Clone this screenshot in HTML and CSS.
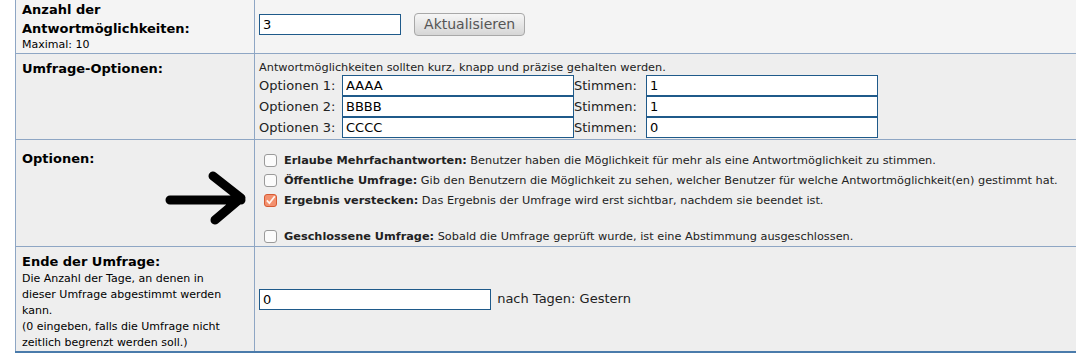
FILE: index.html
```html
<!DOCTYPE HTML>
<html>
<head>
<meta charset="utf-8">
<title>Umfrage erstellen</title>
<link rel="stylesheet" href="styles.css">
</head>
<body>
<div class="page">
  <table class="form">
    <tr class="rowTop">
      <td class="label">
        <b>Anzahl der<br>Antwortmöglichkeiten:</b>
        <div class="hint">Maximal: 10</div>
      </td>
      <td class="field">
        <div class="countBox">
          <input type="text" class="txt txtCount" value="3">
          <button type="button" class="btn">Aktualisieren</button>
        </div>
      </td>
    </tr>
    <tr class="rowOpts">
      <td class="label"><b>Umfrage-Optionen:</b></td>
      <td class="field fieldOpts">
        <div class="note">Antwortmöglichkeiten sollten kurz, knapp und präzise gehalten werden.</div>
        <div class="optGrid">
          <span>Optionen 1:</span><input type="text" class="txt" value="AAAA"><span>Stimmen:</span><input type="text" class="txt" value="1">
          <span>Optionen 2:</span><input type="text" class="txt" value="BBBB"><span>Stimmen:</span><input type="text" class="txt" value="1">
          <span>Optionen 3:</span><input type="text" class="txt" value="CCCC"><span>Stimmen:</span><input type="text" class="txt" value="0">
        </div>
      </td>
    </tr>
    <tr class="rowChecks">
      <td class="label"><b>Optionen:</b></td>
      <td class="field fieldChecks">
        <div class="chk">
          <svg class="box" width="13" height="13" viewBox="0 0 13 13"><rect x="0.5" y="0.5" width="12" height="12" rx="2.5" fill="#fbfbfb" stroke="#9a9a9a"/></svg>
          <span><b>Erlaube Mehrfachantworten:</b> Benutzer haben die Möglichkeit für mehr als eine Antwortmöglichkeit zu stimmen.</span>
        </div>
        <div class="chk">
          <svg class="box" width="13" height="13" viewBox="0 0 13 13"><rect x="0.5" y="0.5" width="12" height="12" rx="2.5" fill="#fbfbfb" stroke="#9a9a9a"/></svg>
          <span><b>Öffentliche Umfrage:</b> Gib den Benutzern die Möglichkeit zu sehen, welcher Benutzer für welche Antwortmöglichkeit(en) gestimmt hat.</span>
        </div>
        <div class="chk">
          <svg class="box" width="13" height="13" viewBox="0 0 13 13"><rect x="0.5" y="0.5" width="12" height="12" rx="2.5" fill="#f3906e" stroke="#d65a33"/><path d="M2.8 6.4 L5.4 9.2 L10.8 2.2" fill="none" stroke="#fff4ee" stroke-width="1.8"/></svg>
          <span><b>Ergebnis verstecken:</b> Das Ergebnis der Umfrage wird erst sichtbar, nachdem sie beendet ist.</span>
        </div>
        <div class="chk chkLast">
          <svg class="box" width="13" height="13" viewBox="0 0 13 13"><rect x="0.5" y="0.5" width="12" height="12" rx="2.5" fill="#fbfbfb" stroke="#9a9a9a"/></svg>
          <span><b>Geschlossene Umfrage:</b> Sobald die Umfrage geprüft wurde, ist eine Abstimmung ausgeschlossen.</span>
        </div>
      </td>
    </tr>
    <tr class="rowEnd">
      <td class="label">
        <b>Ende der Umfrage:</b>
        <div class="hint hintLong">Die Anzahl der Tage, an denen in dieser Umfrage abgestimmt werden kann.<br>(0 eingeben, falls die Umfrage nicht zeitlich begrenzt werden soll.)</div>
      </td>
      <td class="field">
        <input type="text" class="txt txtDays" value="0"> <span class="after">nach Tagen: Gestern</span>
      </td>
    </tr>
  </table>

  <!-- hand drawn arrow on top of the screenshot -->
  <svg class="arrow" width="100" height="64" viewBox="0 0 100 64">
    <path d="M10 32 L81 32 M53 8 L81 30 L55 52" fill="none" stroke="#000" stroke-width="9" stroke-linecap="round" stroke-linejoin="round"/>
  </svg>
</div>
</body>
</html>
```

FILE: styles.css
```css
html, body { margin:0; padding:0; }
body { background:#fff; font-family:"DejaVu Sans", Verdana, sans-serif; color:#000; overflow:hidden; }
.page { position:relative; padding-left:15px; }
.form { width:1090px; border-collapse:collapse; table-layout:fixed; border-left:1px solid #8ea6c4; border-bottom:2px solid #4a7bab; }
.form td { border-top:1px solid #8ea6c4; padding:0; background:#eeeeee; }
.form .rowTop td { border-top:none; background:#f4f4f4; }
.label { width:232px; border-right:1px solid #8ea6c4; vertical-align:top; padding:0 0 0 6px !important; font-size:13px; line-height:19px; }
.hint { font-size:11px; line-height:13px; font-weight:normal; }
.field { vertical-align:middle; padding:0 0 0 4px !important; font-size:13px; color:#222; }

.rowTop td { height:53px; }
.rowTop .label b { display:block; }
.countBox { margin-bottom:5px; }
.txt { font-family:"DejaVu Sans", Verdana, sans-serif; font-size:13px; color:#000; height:21px; box-sizing:border-box; border:1px solid #1f5a8a; background:#fff; margin:0; padding:0 3px; vertical-align:middle; }
.txtCount { width:142px; }
.btn { font-family:"DejaVu Sans", Verdana, sans-serif; font-size:14px; color:#555; width:111px; height:23px; margin-left:9px; border:1px solid #a8a8a8; border-radius:4px; background:linear-gradient(#f6f6f6, #d6d6d6); vertical-align:middle; padding:0; }

.rowOpts .label { padding-top:5px !important; }
.fieldOpts { vertical-align:top; padding-top:7px !important; padding-bottom:1px !important; }
.note { font-size:11.3px; line-height:14px; }
.optGrid { display:grid; grid-template-columns:83px 232px 72px 232px; align-items:center; }
.optGrid span { font-size:13px; }

.rowChecks .label { padding-top:9px !important; }
.fieldChecks { vertical-align:top; padding:10px 0 0 9px !important; font-size:11.3px; }
.chk { display:flex; align-items:center; gap:7px; height:20px; }
.chk .box { flex:none; }
.chkLast { margin-top:16px; }

.rowEnd .label { padding-top:6px !important; padding-right:24px !important; line-height:18px; }
.hintLong { line-height:16px; }
.txtDays { width:232px; }
.after { margin-left:2px; }

.arrow { position:absolute; left:160px; top:168px; }
```
